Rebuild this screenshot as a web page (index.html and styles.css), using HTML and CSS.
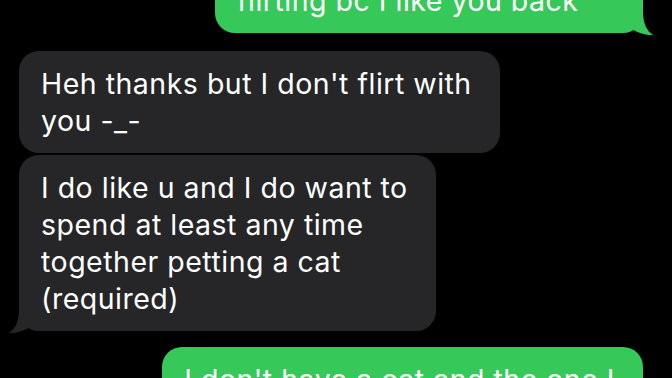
FILE: index.html
```html
<!DOCTYPE html>
<html>
<head>
<meta charset="utf-8">
<link rel="stylesheet" href="styles.css">
</head>
<body>
<div class="thread">
  <div class="bubble sent first wide">
    <p class="text">flirting bc I like you back</p>
    <svg class="tail" width="30" height="28" viewBox="0 0 30 28"><path d="M10,4 C10,17 6,24 0,28 C7,28.5 14,26.5 23,21 L23,4 Z"/></svg>
  </div>
  <div class="group">
    <div class="bubble recv">
      <p class="text">Heh thanks but I don't flirt with<br>you -_-</p>
    </div>
    <div class="bubble recv">
      <p class="text">I do like u and I do want to<br>spend at least any time<br>together petting a cat<br>(required)</p>
      <svg class="tail" width="30" height="28" viewBox="0 0 30 28"><path d="M10,4 C10,17 6,24 0,28 C7,28.5 14,26.5 23,21 L23,4 Z"/></svg>
    </div>
  </div>
  <div class="bubble sent">
    <p class="text">I don't have a cat and the one I<br>know</p>
  </div>
</div>
</body>
</html>
```
FILE: styles.css
```css
html, body {
  margin: 0;
  padding: 0;
  background: #000;
  width: 672px;
  height: 378px;
  overflow: hidden;
}
.thread {
  display: flex;
  flex-direction: column;
  font-family: Inter, "Liberation Sans", sans-serif;
  font-size: 28.5px;
  letter-spacing: 0.5px;
  line-height: 37px;
  color: #fff;
}
.group {
  display: flex;
  flex-direction: column;
  gap: 2px;
  margin-top: 18px;
  margin-bottom: 16px;
}
.bubble {
  position: relative;
  border-radius: 20px;
  padding: 14px 28px 14px 22px;
  width: fit-content;
  box-sizing: border-box;
}
.text {
  margin: 0;
  white-space: nowrap;
}
.recv {
  background: #262628;
  align-self: flex-start;
  margin-left: 19px;
}
.sent {
  background: #36c95a;
  align-self: flex-end;
  margin-right: 29px;
}
.first {
  margin-top: -34px;
  padding-top: 16px;
}
.wide {
  width: 428px;
}
.tail {
  position: absolute;
  bottom: -2px;
  display: block;
}
.recv .tail {
  left: -10px;
  fill: #262628;
}
.sent .tail {
  right: -10px;
  fill: #36c95a;
  transform: scaleX(-1);
}
```
